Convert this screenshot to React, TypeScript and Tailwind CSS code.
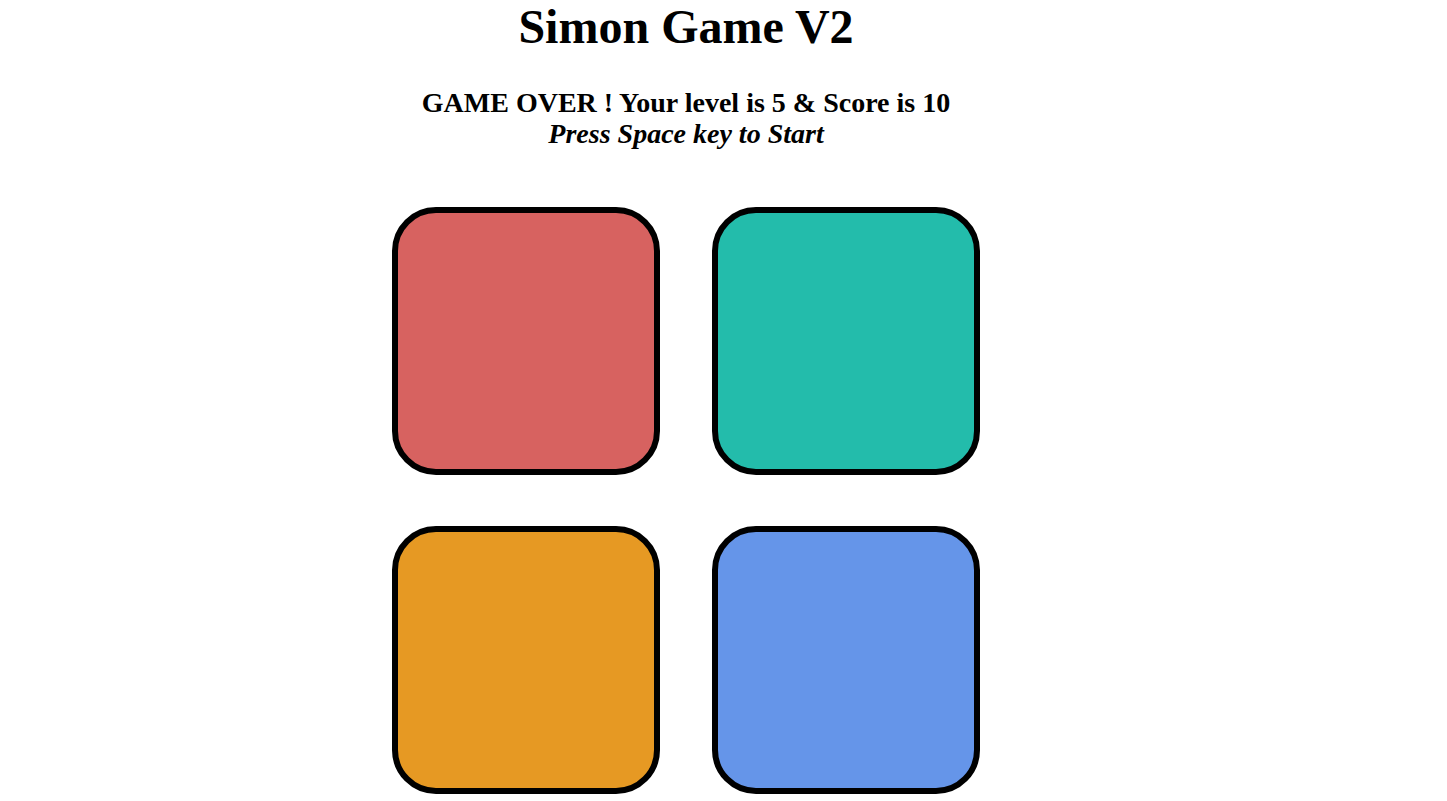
export default function App() {
  const pads = [
    { id: "red", color: "bg-[#d76260]" },
    { id: "green", color: "bg-[#23bcab]" },
    { id: "yellow", color: "bg-[#e69923]" },
    { id: "blue", color: "bg-[#6595e9]" },
  ];

  return (
    <div className="w-[1372px] min-h-[801px] bg-white text-black font-['Liberation_Serif','Times_New_Roman',serif] flex flex-col items-center">
      <h1 className="text-[48px] leading-[53px] font-bold">Simon Game V2</h1>
      <div className="mt-[34px] text-center text-[28px] leading-[31px] font-bold">
        <p>GAME OVER ! Your level is 5 &amp; Score is 10</p>
        <p className="italic">Press Space key to Start</p>
      </div>
      <div className="mt-[58px] grid grid-cols-2 gap-x-[52px] gap-y-[51px]">
        {pads.map((p) => (
          <div
            key={p.id}
            id={p.id}
            className={`w-[268px] h-[268px] border-[6px] border-black rounded-[44px] ${p.color}`}
          />
        ))}
      </div>
    </div>
  );
}
